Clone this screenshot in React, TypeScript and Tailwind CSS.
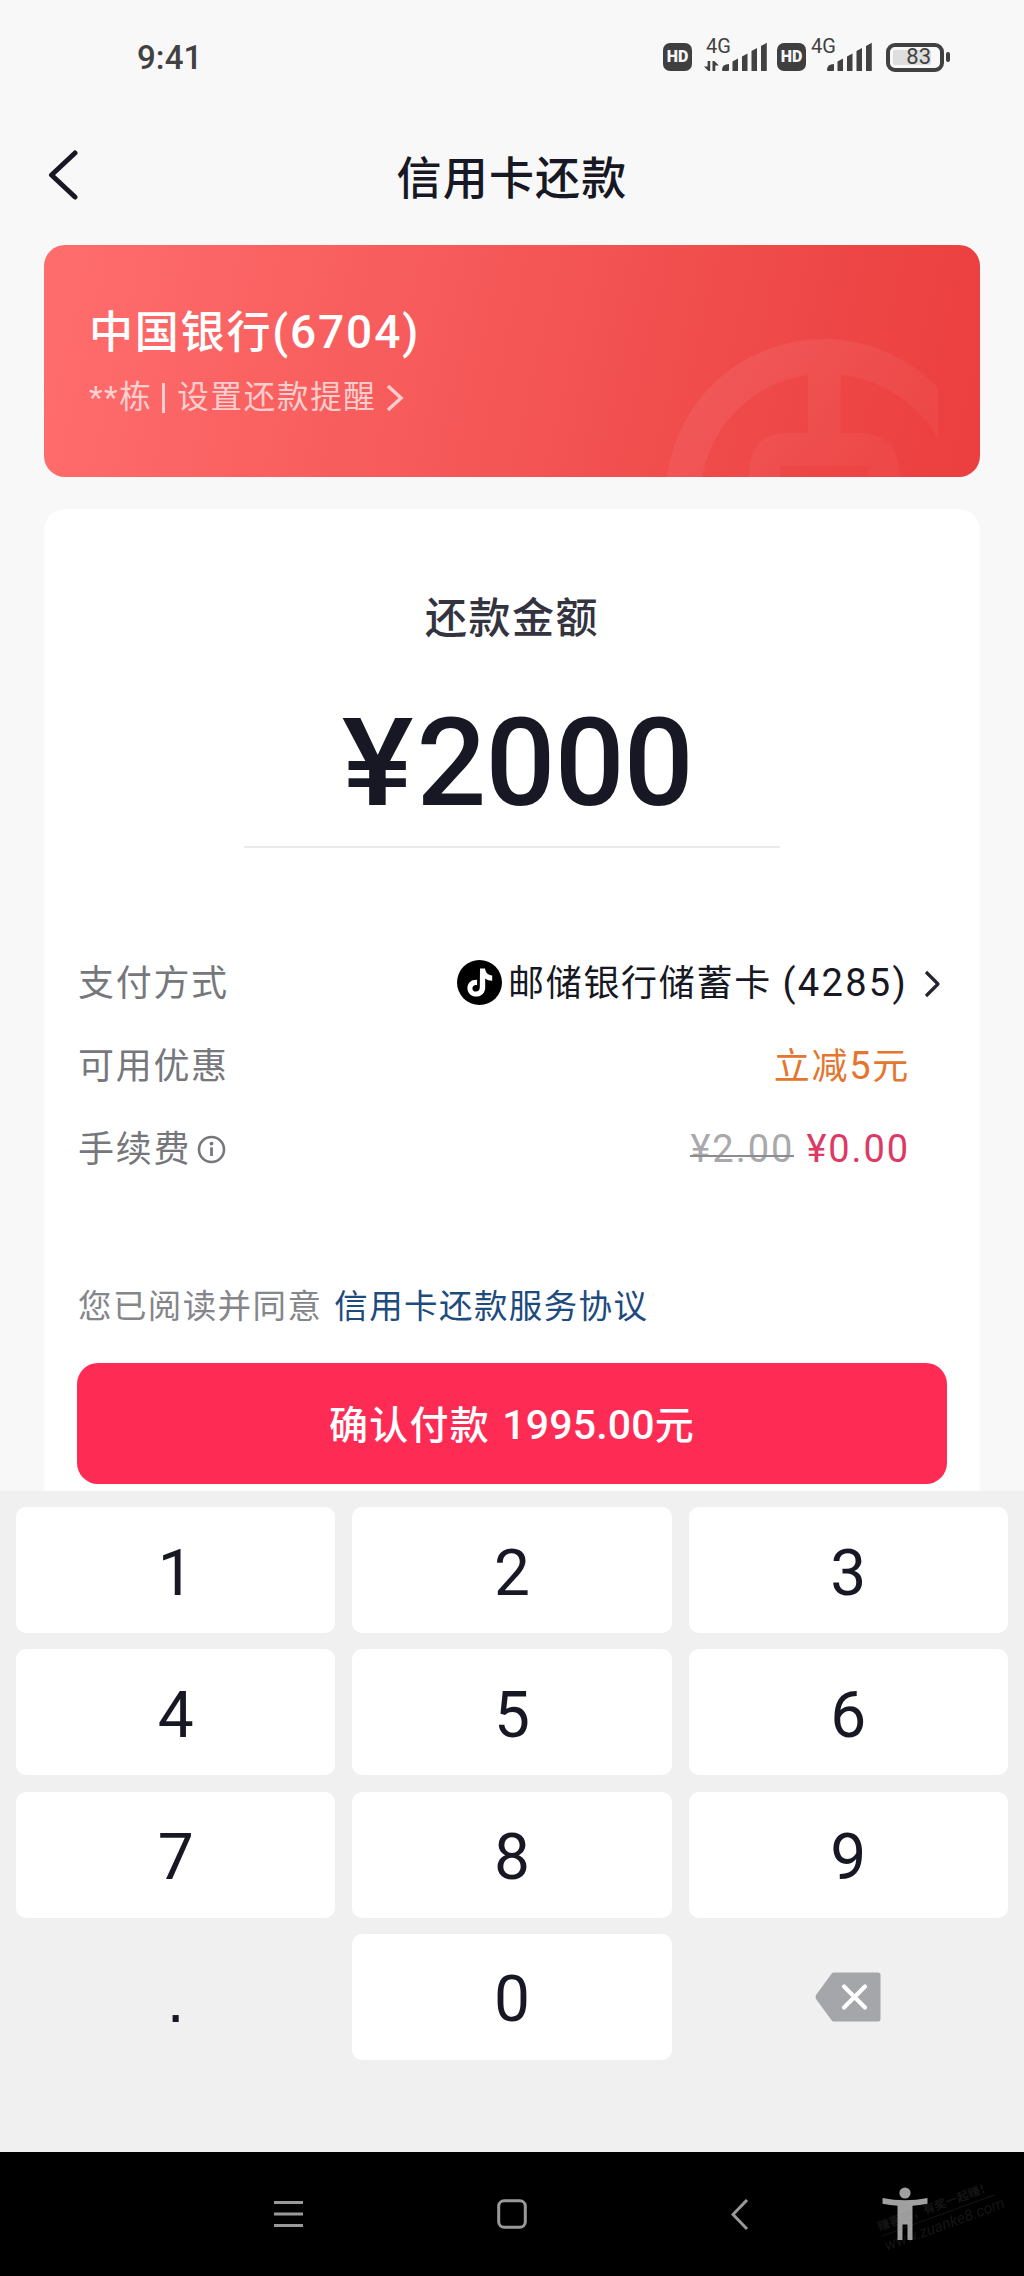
import type { ReactNode } from 'react'

const keys = ['1', '2', '3', '4', '5', '6', '7', '8', '9']

function HdBadge() {
  return (
    <div className="flex h-7 w-[29px] items-center justify-center rounded-[7px] bg-[#3f3f3f] text-[16px] font-black leading-none text-[#f7f7f7]">
      HD
    </div>
  )
}

function Signal({ data = false }: { data?: boolean }) {
  return (
    <svg width="63" height="42" viewBox="0 -8 63 42" fill="#414141" className="-mt-2">
      <text x="2" y="14.500" fontSize="20" fontFamily="Roboto, sans-serif" fontWeight="400">4G</text>
      {data && (
        <path d="M3.6 23h2.6v10H4.4L0 28.5h3.600zM8.500 33V23h1.800l4.600 4.500h-3.600V33z" />
      )}
      <path d="M18 32q0-6 7-6v6q0 1-1 1h-5q-1 0-1-1zM28.500 23.500l5.500-3v12q0 .5-.5.500h-4.500q-.5 0-.5-.5zM38 18.500l5.500-3v17q0 .5-.5.500h-4.500q-.5 0-.5-.5zM47.500 13l5.500-3v22.500q0 .5-.5.500h-4.500q-.5 0-.5-.5zM57 8l5.800-3.200v27.700q0 .5-.5.500h-4.800q-.5 0-.5-.5z" />
    </svg>
  )
}

function StatusBar() {
  return (
    <header className="flex h-[115px] justify-between pl-[137px] pr-[74px] text-[#414141]">
      <span className="mt-[38px] text-[33px] font-medium leading-[40px] tracking-[0.1px]">9:41</span>
      <div className="mt-[38px] flex h-[34px]">
        <div className="pt-[5px]"><HdBadge /></div>
        <div className="ml-3"><Signal data /></div>
        <div className="ml-[10px] pt-[5px]"><HdBadge /></div>
        <div className="ml-[3px]"><Signal /></div>
        <div className="ml-[14px] flex items-center pt-[4px]">
          <div className="flex h-[29px] w-[58px] rounded-[9px] border-4 border-[#414141] p-[3px]">
            <div className="flex w-[38px] items-center justify-end rounded-[2px] bg-[#dedede]">
              <span className="text-[22px] leading-none">83</span>
            </div>
          </div>
          <div className="ml-[2px] h-[10px] w-[4px] rounded-[2px] bg-[#414141]" />
        </div>
      </div>
    </header>
  )
}

function TitleBar() {
  return (
    <div className="grid h-[130px] grid-cols-[1fr_auto_1fr] items-center px-[48px] text-[#171823]">
      <svg width="31" height="50" viewBox="0 0 31 50" fill="none" className="-mt-[10px]">
        <path d="M27 3 3.500 25 27 47" stroke="#171823" strokeWidth="5" strokeLinecap="round" strokeLinejoin="round" />
      </svg>
      <h1 className="text-[45px] font-medium leading-[60px] tracking-[1.2px]">信用卡还款</h1>
    </div>
  )
}

function BankCard() {
  return (
    <section className="relative mx-11 h-[232px] overflow-hidden rounded-[21px] bg-[linear-gradient(103deg,#ff6c6c_3%,#f45555_52%,#ee4747_80%,#ec3e3e_100%)] pl-[45px] text-white">
      <svg className="absolute bottom-0 right-0" width="320" height="140" viewBox="660 337 320 140" fill="none">
        <defs>
          <linearGradient id="fade" x1="780" y1="340" x2="850" y2="477" gradientUnits="userSpaceOnUse">
            <stop stopColor="#fff" stopOpacity=".065" />
            <stop offset="1" stopColor="#fff" stopOpacity=".03" />
          </linearGradient>
        </defs>
        <path
          fill="url(#fade)"
          fillRule="evenodd"
          d="M667 477A158 158 0 0 1 938 388V439A126 126 0 0 0 840.500 375V433H862Q900 436 900 477H868V466H780V477H749Q749 433 787 433H808V375A125 125 0 0 0 702 477Z"
        />
      </svg>
      <h2 className="pt-[57px] text-[44px] font-medium leading-[60px] tracking-[1.8px]">
        中国银行<span className="text-[46px] tracking-[1.9px]">(6704)</span>
      </h2>
      <p className="mt-[5px] flex items-center text-[31.500px] leading-[60px] tracking-[1.7px] text-white/70">
        <span className="tracking-[1.500px]">**</span>栋
        <span className="ml-[10px] mr-3 h-[30px] w-[3px] bg-white/70" />
        设置还款提醒
        <svg width="20" height="30" viewBox="0 0 20 30" fill="none" className="ml-[8px]">
          <path d="m3 3 13 12L3 27" stroke="currentColor" strokeWidth="3.500" />
        </svg>
      </p>
    </section>
  )
}

function Row({ label, children }: { label: ReactNode; children: ReactNode }) {
  return (
    <div className="flex h-[83px] items-center justify-between text-[36px] leading-[60px] tracking-[1.7px]">
      <span className="flex items-center text-[#76777c]">{label}</span>
      <div className="flex items-center">{children}</div>
    </div>
  )
}

function PayIcon() {
  return (
    <svg width="45" height="45" viewBox="0 0 45 45" className="-mt-[3px]">
      <circle cx="22.500" cy="22.500" r="22.500" fill="#000" />
      <path
        d="M23 8.500h5c.6 4.300 3 6.600 7.200 7v5.300c-2.800 0-5-.8-7-2.200v8.900c0 5.200-3.700 9.100-8.900 9.100-5 0-8.900-3.600-8.900-8.400 0-5.200 4.400-8.800 9.700-8.300v5.300c-2.700-.5-4.700.8-4.700 3.200 0 1.900 1.500 3.200 3.400 3.200 2.500 0 4-1.500 4-4.300z"
        fill="#fff"
      />
    </svg>
  )
}

function PaymentPanel() {
  return (
    <section className="mx-11 mt-8 h-[982px] overflow-hidden rounded-t-[21px] bg-white px-[33px] pt-[80px]">
      <h2 className="text-center text-[42px] font-medium leading-[60px] tracking-[1.500px] text-[#33343f]">还款金额</h2>
      <div className="mx-auto mt-[44px] h-[155px] w-[536px] border-b-2 border-[#ebebeb] pl-[14px] text-center text-[123px] font-medium leading-[140px] text-[#171823]">
        <span className="mr-[6px] inline-block scale-x-110">¥</span>
        <span className="tracking-[-0.8px]">2000</span>
      </div>

      <div className="mt-[94px] pl-px pr-[37px]">
        <Row label="支付方式">
          <PayIcon />
          <span className="ml-[6px] whitespace-pre text-[#171823]">
            邮储银行储蓄卡 <span className="text-[38px] tracking-[2.300px]">(4285)</span>
          </span>
          <svg width="22" height="30" viewBox="0 0 22 30" fill="none" className="-mr-[34px] ml-[14px]">
            <path d="m4 3 12 12L4 27" stroke="#24252f" strokeWidth="3.200" strokeLinejoin="round" />
          </svg>
        </Row>
        <Row label="可用优惠">
          <span className="text-[#e4762f]">立减<span className="text-[38px]">5</span>元</span>
        </Row>
        <Row
          label={
            <>
              手续费
              <svg width="29" height="29" viewBox="0 0 29 29" fill="none" className="ml-[6px]">
                <circle cx="14.500" cy="14.500" r="12.500" stroke="#76777c" strokeWidth="2.600" />
                <circle cx="14.500" cy="8.600" r="1.900" fill="#76777c" />
                <path d="M14.500 12.300v8.700" stroke="#76777c" strokeWidth="2.800" />
              </svg>
            </>
          }
        >
          <span className="relative -mt-px text-[38px] tracking-[2px] text-[#a9a9ab]">
            ¥2.00
            <i className="absolute inset-x-0 top-[36px] h-[2px] bg-[#8c8c90]" />
          </span>
          <span className="-mt-px ml-3 text-[38px] tracking-[1.900px] text-[#dd3a63]">¥0.00</span>
        </Row>
      </div>

      <p className="mt-[86px] pl-px text-[33.500px] leading-[60px] tracking-[1.400px] text-[#85868a]">
        您已阅读并同意<a className="ml-[12px] text-[#1d4b7e]">信用卡还款服务协议</a>
      </p>
      <button className="mt-[26px] flex h-[121px] w-[870px] items-center justify-center rounded-[21px] bg-[#fe2c55] pt-[5px] text-[39px] font-medium tracking-[1.300px] text-white">
        确认付款<span className="ml-3 text-[41px] tracking-[0.200px]">1995.00</span>元
      </button>
    </section>
  )
}

function Keypad() {
  return (
    <section className="h-[661px] bg-[#f0f0f0] px-4 pt-4">
      <div className="grid grid-cols-3 gap-x-[17px] gap-y-[16.300px] text-[64px] leading-none text-[#171823]">
        {keys.map((key) => (
          <button key={key} className="h-[126px] rounded-[10px] bg-white pt-[7px]">{key}</button>
        ))}
        <button className="h-[126px] pt-[7px] font-['Liberation_Sans',sans-serif]">.</button>
        <button className="h-[126px] rounded-[10px] bg-white pt-[7px]">0</button>
        <button className="flex h-[126px] items-center justify-center">
          <svg width="66" height="50" viewBox="0 0 66 50">
            <path d="M18.500.5H63q2.500 0 2.500 2.500v44q0 2.500-2.500 2.500H18.500q-1.500 0-2.500-2L1 27q-1-2 0-4L16 2.500q1-2 2.500-2z" fill="#a5a6aa" />
            <path d="m29 14.500 21 21m0-21-21 21" stroke="#fff" strokeWidth="4.200" strokeLinecap="round" />
          </svg>
        </button>
      </div>
    </section>
  )
}

function NavBar() {
  return (
    <nav className="relative flex h-[124px] items-start overflow-hidden bg-black pl-[274px] pt-[47px]">
      <svg width="29" height="30" viewBox="0 0 29 30" stroke="#999" strokeWidth="3">
        <path d="M0 3.500h29M0 15h29M0 26.500h29" />
      </svg>
      <svg width="30" height="30" viewBox="0 0 30 30" fill="none" className="ml-[194px]">
        <rect x="1.700" y="1.700" width="26.600" height="26.600" rx="5.500" stroke="#999" strokeWidth="3" />
      </svg>
      <svg width="18" height="32" viewBox="0 0 18 32" fill="none" className="ml-[204px]">
        <path d="M16 1 2 15.500 16 30" stroke="#999" strokeWidth="3" />
      </svg>
      <svg width="48" height="54" viewBox="0 0 48 54" fill="#a0a0a0" className="-mt-3 ml-[132px]">
        <circle cx="24" cy="6" r="5.600" />
        <path d="M1.500 11Q24 15.500 46.500 11v5.700q-8 1.500-15 2.100V53h-5V37.500h-5V53h-5V18.800q-7-.6-15-2.100z" />
      </svg>
      {/* faint site stamp over the bar */}
      <div className="absolute left-[878px] top-[44px] w-[126px] -rotate-[20deg] whitespace-nowrap text-[#8080802a]">
        <div className="w-[120px] border-b border-[#8080802a] text-[12px] font-bold leading-[18px]">赚客吧，有奖一起赚！</div>
        <div className="text-[15.500px] italic leading-[20px]">www.zuanke8.com</div>
      </div>
    </nav>
  )
}

export default function App() {
  return (
    <main className="h-[2276px] w-[1024px] overflow-hidden bg-[#f8f8f8] font-[Roboto,'Noto_Sans_CJK_SC',sans-serif]">
      <StatusBar />
      <TitleBar />
      <BankCard />
      <PaymentPanel />
      <Keypad />
      <NavBar />
    </main>
  )
}
